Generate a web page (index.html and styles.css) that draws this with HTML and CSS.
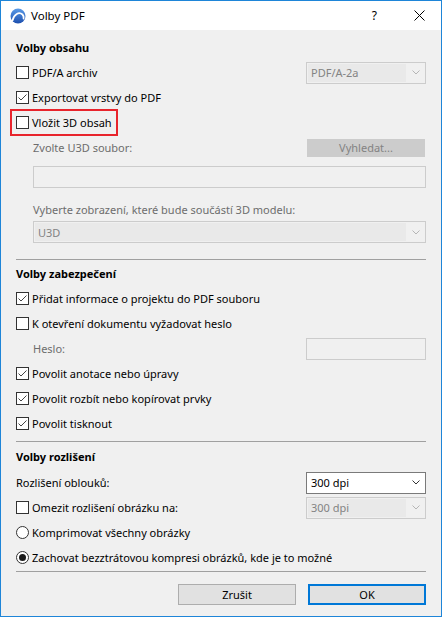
FILE: index.html
```html
<!DOCTYPE html>
<html lang="cs">
<head>
<meta charset="utf-8">
<title>Volby PDF</title>
<link rel="stylesheet" href="styles.css">
</head>
<body>
<div class="window">
  <div class="titlebar">
    <svg class="app-icon" width="16" height="16" viewBox="0 0 16 16">
      <defs>
        <linearGradient id="g" x1="0" y1="0" x2="0" y2="1">
          <stop offset="0" stop-color="#5a9be8"/>
          <stop offset="1" stop-color="#1d4fae"/>
        </linearGradient>
      </defs>
      <circle cx="8" cy="8" r="7.5" fill="url(#g)"/>
      <path d="M2.5 12.5 C4 6 9 3.5 12.5 6.5 C13.5 7.5 13.8 9 13.6 10.5" fill="none" stroke="#fff" stroke-width="1.8" stroke-linecap="round"/>
    </svg>
    <span class="title">Volby PDF</span>
    <span class="help">?</span>
    <svg class="close" width="11" height="11" viewBox="0 0 11 11">
      <path d="M0.5 0.5 L10.5 10.5 M10.5 0.5 L0.5 10.5" stroke="#000" stroke-width="1"/>
    </svg>
  </div>

  <div class="body">
    <div class="section-title">Volby obsahu</div>

    <div class="row">
      <span class="check"><span class="box"></span>PDF/A archiv</span>
      <div class="combo disabled"><span class="combo-text">PDF/A-2a</span><span class="arrow"><svg width="8" height="5" viewBox="0 0 8 5"><path d="M0.5 0.5 L4 4 L7.5 0.5" fill="none" stroke="currentColor"/></svg></span></div>
    </div>
    <div class="row">
      <span class="check"><span class="box"><svg width="11" height="11" viewBox="0 0 11 11"><path d="M1.5 5.5 L4 8 L9.5 2.5" fill="none" stroke="#444" stroke-width="1"/></svg></span>Exportovat vrstvy do PDF</span>
    </div>
    <div class="row">
      <span class="check highlight"><span class="box"></span>Vložit 3D obsah</span>
    </div>
    <div class="row indent">
      <span class="muted">Zvolte U3D soubor:</span>
      <div class="button disabled-btn">Vyhledat...</div>
    </div>
    <div class="field wide"></div>
    <div class="label-row indent muted">Vyberte zobrazení, které bude součástí 3D modelu:</div>
    <div class="combo disabled wide-combo"><span class="combo-text">U3D</span><span class="arrow"><svg width="8" height="5" viewBox="0 0 8 5"><path d="M0.5 0.5 L4 4 L7.5 0.5" fill="none" stroke="currentColor"/></svg></span></div>

    <div class="separator sep1"></div>

    <div class="section-title">Volby zabezpečení</div>
    <div class="row">
      <span class="check"><span class="box"><svg width="11" height="11" viewBox="0 0 11 11"><path d="M1.5 5.5 L4 8 L9.5 2.5" fill="none" stroke="#444" stroke-width="1"/></svg></span>Přidat informace o projektu do PDF souboru</span>
    </div>
    <div class="row">
      <span class="check"><span class="box"></span>K otevření dokumentu vyžadovat heslo</span>
    </div>
    <div class="row indent">
      <span class="muted">Heslo:</span>
      <div class="field small"></div>
    </div>
    <div class="row">
      <span class="check"><span class="box"><svg width="11" height="11" viewBox="0 0 11 11"><path d="M1.5 5.5 L4 8 L9.5 2.5" fill="none" stroke="#444" stroke-width="1"/></svg></span>Povolit anotace nebo úpravy</span>
    </div>
    <div class="row">
      <span class="check"><span class="box"><svg width="11" height="11" viewBox="0 0 11 11"><path d="M1.5 5.5 L4 8 L9.5 2.5" fill="none" stroke="#444" stroke-width="1"/></svg></span>Povolit rozbít nebo kopírovat prvky</span>
    </div>
    <div class="row">
      <span class="check"><span class="box"><svg width="11" height="11" viewBox="0 0 11 11"><path d="M1.5 5.5 L4 8 L9.5 2.5" fill="none" stroke="#444" stroke-width="1"/></svg></span>Povolit tisknout</span>
    </div>

    <div class="separator sep2"></div>

    <div class="section-title st3">Volby rozlišení</div>
    <div class="row">
      <span>Rozlišení oblouků:</span>
      <div class="combo enabled"><span class="combo-text">300 dpi</span><span class="arrow"><svg width="8" height="5" viewBox="0 0 8 5"><path d="M0.5 0.5 L4 4 L7.5 0.5" fill="none" stroke="currentColor"/></svg></span></div>
    </div>
    <div class="row">
      <span class="check"><span class="box"></span>Omezit rozlišení obrázku na:</span>
      <div class="combo disabled"><span class="combo-text">300 dpi</span><span class="arrow"><svg width="8" height="5" viewBox="0 0 8 5"><path d="M0.5 0.5 L4 4 L7.5 0.5" fill="none" stroke="currentColor"/></svg></span></div>
    </div>
    <div class="row">
      <span class="check"><span class="radio"></span>Komprimovat všechny obrázky</span>
    </div>
    <div class="row">
      <span class="check"><span class="radio on"></span>Zachovat bezztrátovou kompresi obrázků, kde je to možné</span>
    </div>

    <div class="separator sep3"></div>

    <div class="buttons">
      <div class="button normal">Zrušit</div>
      <div class="button normal default">OK</div>
    </div>
  </div>
</div>
</body>
</html>
```

FILE: styles.css
```css
* { box-sizing: border-box; }
html, body {
  margin: 0;
  padding: 0;
  background: #f0f0f0;
}
body {
  font-family: "Noto Sans", "Open Sans", sans-serif;
  font-size: 11px;
  color: #000;
}
.window {
  width: 442px;
  height: 617px;
  border: 1px solid #1e85d8;
  background: #f0f0f0;
  display: flex;
  flex-direction: column;
}
.titlebar {
  height: 29px;
  background: #fff;
  display: flex;
  align-items: center;
  padding-left: 9px;
  flex: none;
}
.app-icon { flex: none; }
.title {
  margin-left: 5px;
  font-size: 11.5px;
}
.help {
  margin-left: auto;
  margin-right: 37px;
  font-size: 12px;
}
.close { margin-right: 16px; }

.body {
  padding: 4px 15px 0 15px;
  display: flex;
  flex-direction: column;
}
.section-title {
  font-weight: bold;
  height: 26px;
  display: flex;
  align-items: center;
}
.st3 { height: 28px; }
.row {
  height: 25px;
  display: flex;
  align-items: center;
  justify-content: space-between;
  white-space: nowrap;
}
.indent { padding-left: 17px; }
.muted { color: #6d6d6d; }
.check {
  display: inline-flex;
  align-items: center;
}
.box {
  width: 13px;
  height: 13px;
  border: 1px solid #333;
  background: #fff;
  margin-right: 3px;
  display: inline-flex;
  align-items: center;
  justify-content: center;
  flex: none;
}
.box svg { display: block; }
.radio {
  width: 13px;
  height: 13px;
  border: 1px solid #333;
  border-radius: 50%;
  background: #fff;
  margin-right: 3px;
  flex: none;
  display: inline-flex;
  align-items: center;
  justify-content: center;
}
.radio.on::after {
  content: "";
  width: 7px;
  height: 7px;
  border-radius: 50%;
  background: #1a1a1a;
}
.highlight {
  outline: 2px solid #e8242c;
  outline-offset: 4px;
}

.combo {
  width: 120px;
  height: 22px;
  display: flex;
  align-items: stretch;
  flex: none;
}
.combo-text {
  flex: 1;
  padding-left: 4px;
  display: flex;
  align-items: center;
}
.arrow {
  width: 19px;
  display: flex;
  align-items: center;
  justify-content: center;
}
.arrow svg { display: block; }
.combo.disabled {
  border: 1px solid #cccccc;
  background: #f0f0f0;
  color: #838383;
}
.combo.disabled .combo-text {
  background: #e9e9e9;
  margin: 1px 0 1px 1px;
  padding-left: 3px;
}
.combo.disabled .arrow { color: #b5b5b5; }
.combo.enabled {
  border: 1px solid #7a7a7a;
  background: #fff;
}
.combo.enabled .arrow { color: #333; }
.wide-combo {
  width: auto;
  margin-left: 17px;
}

.field {
  height: 22px;
  border: 1px solid #cccccc;
  background: #f0f0f0;
}
.field.wide {
  margin-top: 6px;
  margin-left: 17px;
}
.field.small { width: 120px; }
.label-row {
  height: 24px;
  margin-top: 9px;
  display: flex;
  align-items: center;
}

.button {
  width: 118px;
  height: 18px;
  display: flex;
  align-items: center;
  justify-content: center;
}
.disabled-btn {
  background: #cccccc;
  color: #838383;
  margin-right: 1px;
}
.separator {
  height: 1px;
  background: #a0a0a0;
  flex: none;
}
.sep1 { margin-top: 16px; }
.sep2 { margin-top: 5px; }
.sep3 { margin-top: 1px; }
.buttons {
  margin-top: 12px;
  display: flex;
  justify-content: flex-end;
  gap: 12px;
}
.button.normal {
  height: 21px;
  background: #e1e1e1;
  border: 1px solid #adadad;
}
.button.default {
  border: 2px solid #0078d7;
}
```
